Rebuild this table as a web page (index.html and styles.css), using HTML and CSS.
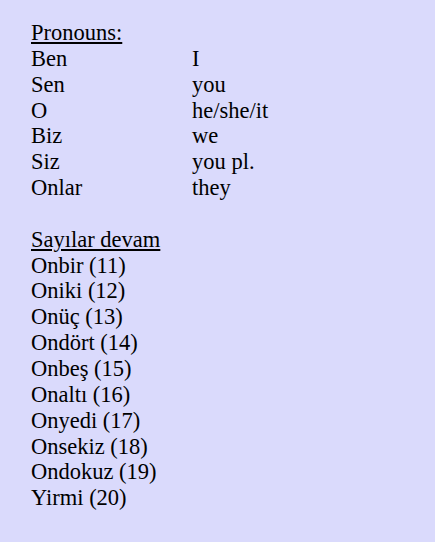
FILE: index.html
```html
<!DOCTYPE html>
<html lang="tr">
<head>
<meta charset="utf-8">
<link rel="stylesheet" href="styles.css">
</head>
<body>
<div class="page">
  <div class="heading">Pronouns:</div>
  <div class="pairs">
    <span>Ben</span><span>I</span>
    <span>Sen</span><span>you</span>
    <span>O</span><span>he/she/it</span>
    <span>Biz</span><span>we</span>
    <span>Siz</span><span>you pl.</span>
    <span>Onlar</span><span>they</span>
  </div>
  <div class="blank">&nbsp;</div>
  <div class="heading">Sayılar devam</div>
  <div class="list">
    <div>Onbir (11)</div>
    <div>Oniki (12)</div>
    <div>Onüç (13)</div>
    <div>Ondört (14)</div>
    <div>Onbeş (15)</div>
    <div>Onaltı (16)</div>
    <div>Onyedi (17)</div>
    <div>Onsekiz (18)</div>
    <div>Ondokuz (19)</div>
    <div>Yirmi (20)</div>
  </div>
</div>
</body>
</html>
```
FILE: styles.css
```css
html, body {
  margin: 0;
  padding: 0;
  background: #dadafc;
}
body {
  width: 435px;
  height: 542px;
  overflow: hidden;
}
.page {
  padding: 20px 0 0 31px;
  font-family: "Liberation Serif", "Times New Roman", serif;
  font-size: 22.5px;
  line-height: 25.85px;
  color: #000;
}
.heading {
  text-decoration: underline;
  text-underline-offset: 2px;
}
.pairs {
  display: grid;
  grid-template-columns: 161px auto;
}
```
